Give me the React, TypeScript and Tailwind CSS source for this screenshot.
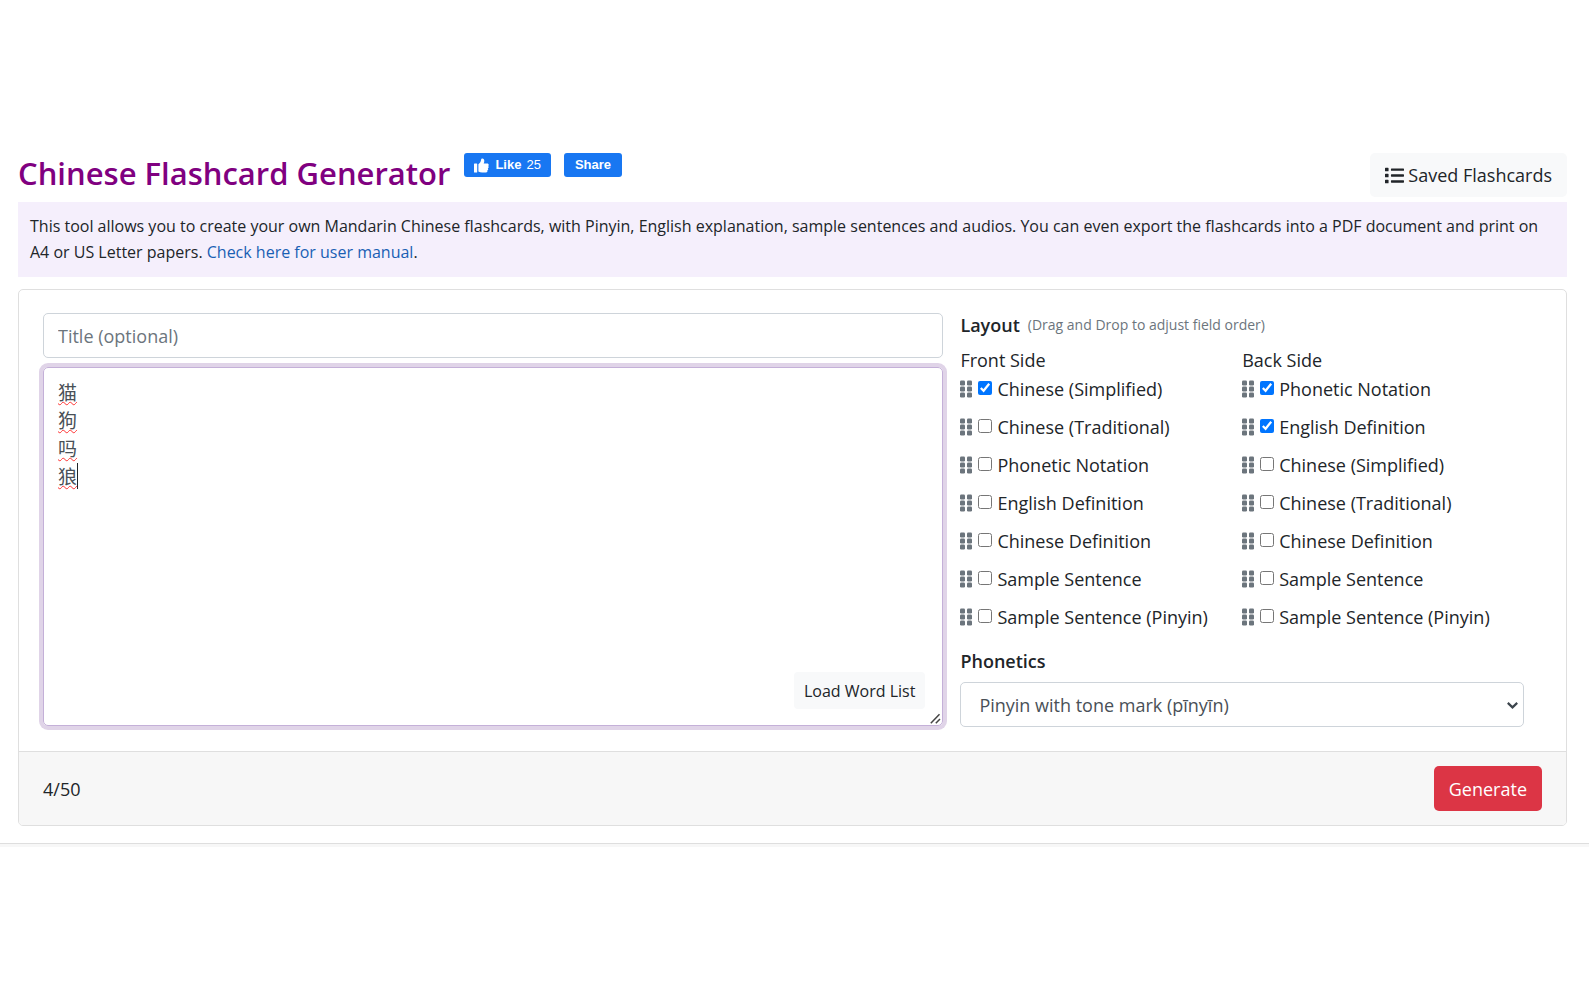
import { useState } from "react";
import { FaList } from "react-icons/fa";

type Field = { id: string; label: string; on: boolean };

const frontFields: Field[] = [
  { id: "simplified", label: "Chinese (Simplified)", on: true },
  { id: "traditional", label: "Chinese (Traditional)", on: false },
  { id: "phonetic", label: "Phonetic Notation", on: false },
  { id: "english", label: "English Definition", on: false },
  { id: "chinese", label: "Chinese Definition", on: false },
  { id: "sentence", label: "Sample Sentence", on: false },
  { id: "sentence-pinyin", label: "Sample Sentence (Pinyin)", on: false },
];

const backFields: Field[] = [
  { id: "phonetic", label: "Phonetic Notation", on: true },
  { id: "english", label: "English Definition", on: true },
  { id: "simplified", label: "Chinese (Simplified)", on: false },
  { id: "traditional", label: "Chinese (Traditional)", on: false },
  { id: "chinese", label: "Chinese Definition", on: false },
  { id: "sentence", label: "Sample Sentence", on: false },
  { id: "sentence-pinyin", label: "Sample Sentence (Pinyin)", on: false },
];

function ThumbIcon() {
  return (
    <svg width="15" height="15" viewBox="0 0 15 15" fill="#fff" className="mr-[6px]" aria-hidden="true">
      <rect x="0" y="5.5" width="3.2" height="9" rx="0.6" />
      <path d="M4.4 6.3C6 5.3 6.9 3.9 7.1 1.6 7.2.8 7.7.4 8.4.4c1.2 0 1.9 1 1.9 2.4 0 1-.2 1.9-.6 2.8h3.6c.8 0 1.4.6 1.4 1.3 0 .5-.2.9-.6 1.1.4.3.6.7.6 1.1 0 .6-.4 1.1-.9 1.2.3.3.4.6.4 1 0 .6-.4 1.1-1 1.2.2.2.2.4.2.7 0 .7-.5 1.2-1.3 1.2H8.2c-1.5 0-2.700-.3-3.800-.9z" />
    </svg>
  );
}

function Grip() {
  return (
    <svg width="12" height="18" viewBox="0 0 12 18" fill="#6c757d" className="shrink-0 cursor-move" aria-hidden="true">
      {[0, 7].map((x) =>
        [0, 6, 12].map((y) => <rect key={`${x}-${y}`} x={x} y={y + 0.5} width="5" height="5" rx="1.2" />),
      )}
    </svg>
  );
}

function FieldList({ side, title, fields }: { side: string; title: string; fields: Field[] }) {
  return (
    <section className="flex-1">
      <h3 className="leading-7">{title}</h3>
      <ul className="mt-px flex flex-col gap-[10px]">
        {fields.map((f) => (
          <li key={f.id} className="flex h-7 items-center">
            <Grip />
            <input
              id={`${side}-${f.id}`}
              type="checkbox"
              defaultChecked={f.on}
              className="mr-[5px] mb-[2px] ml-[6px] size-[14px] shrink-0"
            />
            <label htmlFor={`${side}-${f.id}`} className="whitespace-nowrap">
              {f.label}
            </label>
          </li>
        ))}
      </ul>
    </section>
  );
}

export default function App() {
  const [words, setWords] = useState("猫\n狗\n吗\n狼");
  const count = words.split("\n").filter((w) => w.trim()).length;

  return (
    <div className="bg-white pt-[153px] font-['Open_Sans','Noto_Sans_CJK_SC',sans-serif] text-[18px] leading-7 text-[#212529]">
      <main className="border-b border-[#dedede] pr-[22px] pb-[17px] pl-[18px]">
        <header className="flex items-start">
          <h1 className="text-[31px] leading-10 font-semibold whitespace-nowrap text-[#800080]">
            Chinese Flashcard Generator
          </h1>
          <div className="ml-[14px] flex gap-[13px] font-['Liberation_Sans',sans-serif] text-[13px] leading-[22px] text-white">
            <button type="button" className="flex h-6 items-center rounded-[3px] bg-[#1877f2] px-[10px]">
              <ThumbIcon />
              <span className="mr-[5px] font-bold">Like</span>25
            </button>
            <button type="button" className="flex h-6 items-center rounded-[3px] bg-[#1877f2] px-[11px] font-bold">
              Share
            </button>
          </div>
          <button
            type="button"
            className="ml-auto flex h-11 items-center gap-1 rounded-[5px] bg-[#f8f9fa] px-[15px] whitespace-nowrap"
          >
            <FaList className="size-[19px]" />
            Saved Flashcards
          </button>
        </header>

        <p className="mt-[5px] bg-[#f5effc] px-3 pt-[11px] pb-3 text-[16px] leading-[26px]">
          This tool allows you to create your own Mandarin Chinese flashcards, with Pinyin, English explanation, sample
          sentences and audios. You can even export the flashcards into a PDF document and print on A4 or US Letter
          papers.{" "}
          <a href="#manual" className="text-[#1a5fb4]">
            Check here for user manual
          </a>
          .
        </p>

        <form className="mt-3 rounded-[5px] border border-[#dfdfdf]" onSubmit={(e) => e.preventDefault()}>
          <div className="flex px-6 pt-[23px] pb-6">
            <div className="flex flex-1 flex-col">
              <input
                type="text"
                aria-label="Title"
                placeholder="Title (optional)"
                className="h-[45px] w-full rounded-[5px] border border-[#ced4da] px-[14px] text-[#495057] placeholder:text-[#6c757d]"
              />
              <div className="relative mt-[9px] flex flex-1">
                <textarea
                  aria-label="Word list"
                  spellCheck={false}
                  value={words}
                  onChange={(e) => setWords(e.target.value)}
                  className="h-[359px] w-full resize-y rounded-[5px] border border-[#c4b0d8] px-[14px] py-[11px] text-[19px] leading-[28px] text-[#495057] underline decoration-[#f33] decoration-wavy decoration-1 underline-offset-1 shadow-[0_0_0_4px_#e0d4e8] outline-none [text-decoration-skip-ink:none] [&::-webkit-resizer]:bg-transparent"
                />
                <svg
                  width="11"
                  height="11"
                  viewBox="0 0 11 11"
                  stroke="#444"
                  strokeWidth="1.500"
                  className="pointer-events-none absolute right-[2px] bottom-[3px]"
                  aria-hidden="true"
                >
                  <path d="M.8 10.200 9.500 1.200M5.800 10.200l4.200-4.200" />
                </svg>
                <span aria-hidden="true" className="absolute top-24 left-[34px] h-[26px] w-px bg-[#212529]" />
                <button
                  type="button"
                  className="absolute right-[18px] bottom-[18px] h-[37px] rounded-[4px] bg-[#f8f9fa] px-[10px] text-[16px]"
                >
                  Load Word List
                </button>
              </div>
            </div>

            <div className="ml-[17px] w-[38.8%] pr-[18px]">
              <h2 className="flex items-center gap-2 leading-6">
                <span className="font-semibold">Layout</span>
                <small className="text-[14px] text-[#6c757d]">(Drag and Drop to adjust field order)</small>
              </h2>
              <div className="mt-[9px] flex">
                <FieldList side="front" title="Front Side" fields={frontFields} />
                <FieldList side="back" title="Back Side" fields={backFields} />
              </div>
              <label htmlFor="phonetics" className="mt-4 block font-semibold">
                Phonetics
              </label>
              <div className="relative mt-[7px]">
                <select
                  id="phonetics"
                  className="h-[45px] w-full appearance-none rounded-[5px] border border-[#ced4da] bg-white px-[18px] text-[#495057]"
                >
                  <option>Pinyin with tone mark (pīnyīn)</option>
                </select>
                <svg
                  width="11"
                  height="7"
                  viewBox="0 0 11 7"
                  fill="none"
                  stroke="#3d454d"
                  strokeWidth="2.200"
                  className="pointer-events-none absolute top-5 right-[6px]"
                  aria-hidden="true"
                >
                  <path d="M.8.900 5.500 5.400 10.200.900" />
                </svg>
              </div>
            </div>
          </div>

          <footer className="flex items-center justify-between rounded-b-[4px] border-t border-[#dfdfdf] bg-[#f7f7f7] px-6 py-[14px]">
            <span>{count}/50</span>
            <button type="submit" className="h-[45px] rounded-[5px] bg-[#dc3545] px-[15px] text-white">
              Generate
            </button>
          </footer>
        </form>
      </main>
      <div className="h-[3px] bg-[#f7f7f7]" />
    </div>
  );
}
